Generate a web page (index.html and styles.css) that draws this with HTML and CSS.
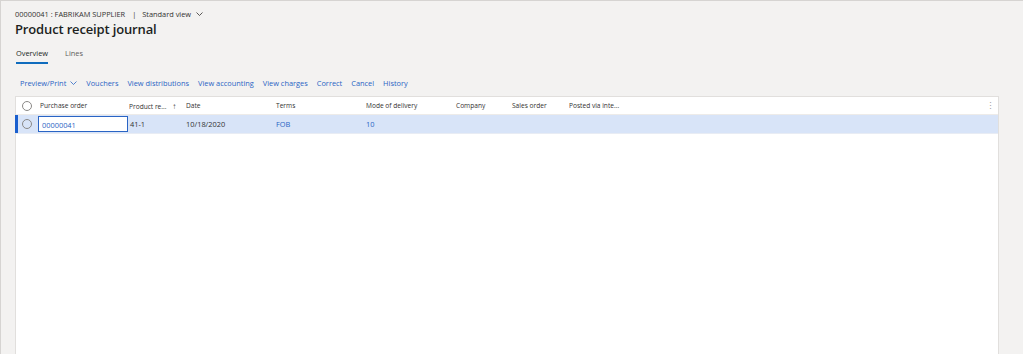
FILE: index.html
```html
<!DOCTYPE html>
<html lang="en">
<head>
    <meta charset="UTF-8">
    <title>Product receipt journal</title>
    <link rel="stylesheet" href="styles.css">
</head>
<body>
    <div class="page">
        <div class="crumb">
            <span>00000041 : FABRIKAM SUPPLIER</span>
            <span class="sep">|</span>
            <span>Standard view</span>
            <svg class="chev" width="7" height="4" viewBox="0 0 7 4"><path d="M0.5 0.5 L3.5 3.5 L6.5 0.5" fill="none" stroke="#323130" stroke-width="0.8"/></svg>
        </div>
        <h1 class="title">Product receipt journal</h1>

        <div class="tabs">
            <span class="tab active">Overview</span>
            <span class="tab">Lines</span>
        </div>

        <div class="actions">
            <span class="action">Preview/Print
                <svg class="chev" width="7" height="4" viewBox="0 0 7 4"><path d="M0.5 0.5 L3.5 3.5 L6.5 0.5" fill="none" stroke="#2a64c4" stroke-width="0.8"/></svg>
            </span>
            <span class="action">Vouchers</span>
            <span class="action">View distributions</span>
            <span class="action">View accounting</span>
            <span class="action">View charges</span>
            <span class="action">Correct</span>
            <span class="action">Cancel</span>
            <span class="action">History</span>
        </div>

        <div class="grid">
            <div class="row head">
                <div class="cell check"><span class="radio"></span></div>
                <div class="cell c-po">Purchase order</div>
                <div class="cell c-pr">Product re... <span class="arrow">&#8593;</span></div>
                <div class="cell c-date">Date</div>
                <div class="cell c-terms">Terms</div>
                <div class="cell c-mode">Mode of delivery</div>
                <div class="cell c-comp">Company</div>
                <div class="cell c-so">Sales order</div>
                <div class="cell c-post">Posted via inte...</div>
                <div class="cell more">&#8942;</div>
            </div>
            <div class="row sel">
                <div class="cell check"><span class="radio"></span></div>
                <div class="cell c-po"><span class="edit">00000041</span></div>
                <div class="cell c-pr">41-1</div>
                <div class="cell c-date">10/18/2020</div>
                <div class="cell c-terms link">FOB</div>
                <div class="cell c-mode link">10</div>
                <div class="cell c-comp"></div>
                <div class="cell c-so"></div>
                <div class="cell c-post"></div>
            </div>
        </div>
    </div>
</body>
</html>
```

FILE: styles.css
```css
html, body {
    margin: 0;
    padding: 0;
    height: 100%;
}
body {
    font-family: 'Segoe UI', 'Open Sans', sans-serif;
    background: #f3f2f1;
    color: #323130;
    overflow: hidden;
}
.page {
    height: 100%;
    box-sizing: border-box;
    border-top: 1px solid #d6d4d2;
    border-left: 1px solid #d6d4d2;
    padding: 0 24px 0 14px;
    display: flex;
    flex-direction: column;
}
.crumb {
    display: flex;
    align-items: center;
    gap: 4px;
    font-size: 7.4px;
    margin-top: 7px;
    height: 11px;
}
.crumb .sep {
    margin: 0 2px 0 3px;
    color: #323130;
}
.chev {
    display: inline-block;
    margin-left: 1px;
}
.title {
    font-size: 13px;
    font-weight: 600;
    letter-spacing: -0.15px;
    margin: 1px 0 0 0;
    height: 19px;
    line-height: 19px;
    color: #201f1e;
}
.tabs {
    display: flex;
    gap: 17px;
    margin-top: 9px;
    padding-left: 1px;
    font-size: 7.4px;
}
.tab {
    padding-bottom: 4px;
    color: #605e5c;
    border-bottom: 2px solid transparent;
}
.tab.active {
    color: #201f1e;
    border-bottom-color: #0f6cbd;
}
.actions {
    display: flex;
    gap: 9px;
    margin-top: 13px;
    padding-left: 5px;
    height: 12px;
    align-items: center;
    font-size: 7.4px;
    color: #2a64c4;
}
.action {
    display: flex;
    align-items: center;
    gap: 3px;
}
.grid {
    margin-top: 7px;
    flex: 1;
    background: #fff;
    border: 1px solid #e1dfdd;
    border-bottom: none;
    font-size: 6.6px;
}
.row {
    display: flex;
    align-items: center;
    position: relative;
}
.row.head {
    height: 17px;
    color: #323130;
    border-bottom: 1px solid #edebe9;
}
.row.sel {
    height: 18px;
    background: #d8e4f8;
    border-bottom: 1px solid #e8ecf4;
    font-size: 7.4px;
}
.row.sel::before {
    content: "";
    position: absolute;
    left: -1px;
    top: 0;
    bottom: 0;
    width: 3px;
    background: #1a5fce;
}
.cell {
    flex: none;
    box-sizing: border-box;
    white-space: nowrap;
}
.check {
    width: 22px;
    display: flex;
    justify-content: center;
}
.radio {
    width: 10px;
    height: 10px;
    border: 1px solid #8a8886;
    border-radius: 50%;
    box-sizing: border-box;
}
.c-po { width: 91px; padding-left: 2px; }
.c-pr { width: 57px; }
.c-date { width: 90px; }
.c-terms { width: 90px; }
.c-mode { width: 90px; }
.c-comp { width: 56px; }
.c-so { width: 57px; }
.c-post { width: 100px; }
.arrow {
    margin-left: 4px;
    color: #484644;
    font-size: 8px;
}
.more {
    margin-left: auto;
    margin-right: 3px;
    color: #a19f9d;
    font-size: 9px;
}
.sel .c-po {
    padding-left: 0;
}
.edit {
    display: block;
    width: 90px;
    height: 16px;
    line-height: 16px;
    box-sizing: border-box;
    border: 1px solid #2a64c4;
    background: #fff;
    padding-left: 3px;
    color: #2a64c4;
}
.sel .c-pr {
    padding-left: 1px;
}
.link {
    color: #2a64c4;
}
```
